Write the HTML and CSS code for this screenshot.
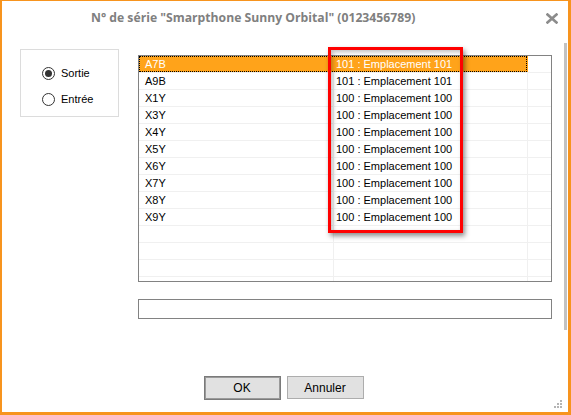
FILE: index.html
```html
<!DOCTYPE html>
<html lang="fr">
<head>
    <meta charset="UTF-8">
    <title>N° de série</title>
    <link rel="stylesheet" href="styles.css">
</head>
<body>
    <div class="window">
        <div class="titlebar">
            <div class="title">N° de série "Smarpthone Sunny Orbital" (0123456789)</div>
            <svg class="close" width="12" height="11" viewBox="0 0 12 11">
                <path d="M1.5 1.5 L10.5 9.5 M10.5 1.5 L1.5 9.5" stroke="#8c8c8c" stroke-width="2.6" stroke-linecap="square"/>
            </svg>
        </div>

        <div class="main">
            <div class="groupbox">
                <label class="radio"><span class="dot checked"></span>Sortie</label>
                <label class="radio"><span class="dot"></span>Entrée</label>
            </div>

            <div class="right">
                <div class="grid">
                    <div class="row selected"><div class="cell c1">A7B</div><div class="cell c2">101 : Emplacement 101</div><div class="cell c3"></div></div>
                    <div class="row"><div class="cell c1">A9B</div><div class="cell c2">101 : Emplacement 101</div><div class="cell c3"></div></div>
                    <div class="row"><div class="cell c1">X1Y</div><div class="cell c2">100 : Emplacement 100</div><div class="cell c3"></div></div>
                    <div class="row"><div class="cell c1">X3Y</div><div class="cell c2">100 : Emplacement 100</div><div class="cell c3"></div></div>
                    <div class="row"><div class="cell c1">X4Y</div><div class="cell c2">100 : Emplacement 100</div><div class="cell c3"></div></div>
                    <div class="row"><div class="cell c1">X5Y</div><div class="cell c2">100 : Emplacement 100</div><div class="cell c3"></div></div>
                    <div class="row"><div class="cell c1">X6Y</div><div class="cell c2">100 : Emplacement 100</div><div class="cell c3"></div></div>
                    <div class="row"><div class="cell c1">X7Y</div><div class="cell c2">100 : Emplacement 100</div><div class="cell c3"></div></div>
                    <div class="row"><div class="cell c1">X8Y</div><div class="cell c2">100 : Emplacement 100</div><div class="cell c3"></div></div>
                    <div class="row"><div class="cell c1">X9Y</div><div class="cell c2">100 : Emplacement 100</div><div class="cell c3"></div></div>
                    <div class="row"><div class="cell c1"></div><div class="cell c2"></div><div class="cell c3"></div></div>
                    <div class="row"><div class="cell c1"></div><div class="cell c2"></div><div class="cell c3"></div></div>
                    <div class="row"><div class="cell c1"></div><div class="cell c2"></div><div class="cell c3"></div></div>
                    <div class="row"><div class="cell c1"></div><div class="cell c2"></div><div class="cell c3"></div></div>
                </div>
                <div class="textbox"></div>
            </div>

            <div class="scrollbar"></div>
        </div>

        <div class="buttons">
            <button class="btn default">OK</button>
            <button class="btn">Annuler</button>
        </div>

        <!-- annotation around the location column -->
        <div class="highlight-box"></div>

        <svg class="grip" width="9" height="9" viewBox="0 0 9 9">
            <rect x="6" y="0" width="2" height="2" fill="#b4b4b4"/>
            <rect x="3" y="3" width="2" height="2" fill="#b4b4b4"/>
            <rect x="6" y="3" width="2" height="2" fill="#b4b4b4"/>
            <rect x="0" y="6" width="2" height="2" fill="#b4b4b4"/>
            <rect x="3" y="6" width="2" height="2" fill="#b4b4b4"/>
            <rect x="6" y="6" width="2" height="2" fill="#b4b4b4"/>
        </svg>
    </div>
</body>
</html>
```

FILE: styles.css
```css
body {
    margin: 0;
    padding: 0;
    background: #fff;
    font-family: "Liberation Sans", Arial, sans-serif;
    font-size: 11px;
    color: #000;
}
.window {
    position: relative;
    width: 571px;
    height: 415px;
    box-sizing: border-box;
    background: #fff;
    border-style: solid;
    border-color: #f7941e;
    border-width: 1px 3px 3px 2px;
    overflow: hidden;
}
.titlebar {
    height: 41px;
    display: flex;
    align-items: center;
}
.title {
    flex: 1;
    padding-left: 89px;
    margin-top: -9px;
    font-family: "Open Sans", sans-serif;
    font-weight: 700;
    font-size: 12.2px;
    color: #808080;
}
.close {
    margin-right: 10px;
    margin-top: -6px;
}
.main {
    display: flex;
    padding-left: 18px;
}
.groupbox {
    width: 99px;
    height: 68px;
    box-sizing: border-box;
    margin-top: 7px;
    border: 1px solid #dcdcdc;
    padding: 10px 0 0 21px;
}
.radio {
    display: flex;
    align-items: center;
    height: 26px;
}
.dot {
    width: 11px;
    height: 11px;
    border: 1px solid #333;
    border-radius: 50%;
    margin-right: 6px;
    position: relative;
    background: #fff;
}
.dot.checked::after {
    content: "";
    position: absolute;
    left: 2px;
    top: 2px;
    width: 7px;
    height: 7px;
    border-radius: 50%;
    background: #333;
}
.right {
    width: 414px;
    margin-left: 19px;
    margin-top: 13px;
}
.grid {
    height: 227px;
    box-sizing: border-box;
    border: 1px solid #828282;
    overflow: hidden;
}
.row {
    display: flex;
    height: 17px;
    box-sizing: border-box;
    border-bottom: 1px solid #f0f0f0;
}
.cell {
    height: 16px;
    line-height: 16px;
    box-sizing: border-box;
    white-space: nowrap;
}
.c1 {
    width: 195px;
    padding-left: 6px;
    border-right: 1px solid #f0f0f0;
}
.c2 {
    width: 194px;
    padding-left: 2px;
    border-right: 1px solid #f0f0f0;
}
.c3 {
    width: 23px;
}
.row.selected {
    position: relative;
}
.row.selected .c1,
.row.selected .c2 {
    background: #ffa31a;
    color: #fff;
    border-right-color: #ffa31a;
}
.row.selected::after {
    content: "";
    position: absolute;
    left: 0;
    top: 0;
    width: 388px;
    height: 16px;
    border: 1px dotted #000;
    box-sizing: border-box;
}
.textbox {
    height: 20px;
    box-sizing: border-box;
    margin-top: 17px;
    border: 1px solid #828282;
}
.scrollbar {
    width: 3px;
    height: 287px;
    margin-top: 1px;
    margin-left: auto;
    margin-right: 1px;
    background: #c2c2c2;
}
.buttons {
    display: flex;
    justify-content: center;
    margin-top: 46px;
    padding-right: 3px;
}
.btn {
    width: 77px;
    height: 23px;
    margin: 0 3px;
    font-family: "Liberation Sans", Arial, sans-serif;
    font-size: 12px;
    color: #000;
    background: #e1e1e1;
    border: 1px solid #adadad;
    padding: 0;
}
.btn.default {
    height: 24px;
    border: 2px solid #9a9a9a;
    outline: 1px solid #7a7a7a;
    outline-offset: -1px;
}
.highlight-box {
    position: absolute;
    left: 326px;
    top: 46px;
    width: 135px;
    height: 186px;
    box-sizing: border-box;
    border: 3px solid #ff0000;
    box-shadow: 2px 3px 5px rgba(0, 0, 0, 0.45), inset 2px 2px 4px rgba(0, 0, 0, 0.25);
}
.grip {
    position: absolute;
    right: 5px;
    bottom: 3px;
}
```
